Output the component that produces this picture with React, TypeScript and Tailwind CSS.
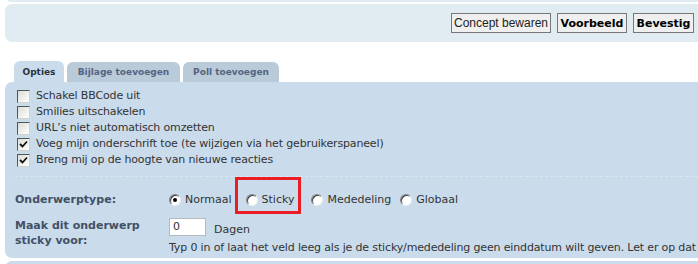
import React from 'react';

const Checkbox = ({ checked }: { checked?: boolean }) => (
  <span className="w-[13px] h-[13px] shrink-0 border border-t-[#555] border-l-[#555] border-b-[#d4d0c8] border-r-[#d4d0c8] bg-gradient-to-br from-[#dcdcd7] to-white flex items-center justify-center">
    {checked && (
      <svg width="9" height="9" viewBox="0 0 9 9">
        <path d="M1 4 L3.5 6.5 L8 1.5" fill="none" stroke="#111" strokeWidth="1.8" />
      </svg>
    )}
  </span>
);

const Radio = ({ checked }: { checked?: boolean }) => (
  <span className="w-[12px] h-[12px] shrink-0 rounded-full border border-t-[#808080] border-l-[#808080] border-b-[#eee] border-r-[#eee] bg-white shadow-[inset_1px_1px_0_#404040] flex items-center justify-center">
    {checked && <span className="w-[4px] h-[4px] rounded-full bg-black" />}
  </span>
);

const options = [
  { label: 'Schakel BBCode uit', checked: false },
  { label: 'Smilies uitschakelen', checked: false },
  { label: 'URL’s niet automatisch omzetten', checked: false },
  { label: 'Voeg mijn onderschrift toe (te wijzigen via het gebruikerspaneel)', checked: true },
  { label: 'Breng mij op de hoogte van nieuwe reacties', checked: true },
];

export default function App() {
  return (
    <div className="w-[698px] h-[264px] overflow-hidden bg-white text-[11px] text-[#333] font-['DejaVu_Sans','Verdana',sans-serif]">
      {/* bottom edge of panel above */}
      <div className="ml-[8px] mr-[-10px] h-[2px] bg-[#e1ebf2] rounded-b-[4px]" />

      {/* submit bar */}
      <div className="mt-[2px] ml-[5px] mr-[-10px] h-[38px] bg-[#e1ebf2] rounded-[7px] flex items-center justify-end gap-[6px] pr-[14px]">
        <button className="w-[100px] h-[20px] bg-[#efefef] border border-[#777] text-[#222] font-['Liberation_Sans',sans-serif] text-[12px] leading-none">
          Concept bewaren
        </button>
        <button className="w-[70px] h-[20px] bg-[#efefef] border border-[#777] text-black font-bold leading-none">
          Voorbeeld
        </button>
        <button className="w-[61px] h-[20px] bg-[#efefef] border border-[#777] text-black font-bold leading-none">
          Bevestig
        </button>
      </div>

      {/* tabs */}
      <div className="mt-[20px] ml-[14px] flex gap-[3px] h-[20px] items-end text-[9px]">
        <div className="w-[50px] h-[21px] rounded-t-[6px] bg-[#cadceb] font-bold text-[#28313f] flex items-center justify-center pt-[2px]">
          Opties
        </div>
        <div className="w-[113px] h-[20px] rounded-t-[6px] bg-[#b9cad9] font-bold text-[#536482] flex items-center justify-center pt-[2px]">
          Bijlage toevoegen
        </div>
        <div className="w-[96px] h-[20px] rounded-t-[6px] bg-[#b9cad9] font-bold text-[#536482] flex items-center justify-center pt-[2px]">
          Poll toevoegen
        </div>
      </div>

      {/* options panel */}
      <div className="ml-[5px] mr-[-10px] h-[176px] bg-[#cadceb] rounded-[7px] pt-[6px]">
        <div className="pl-[12px] flex flex-col">
          {options.map((o) => (
            <div key={o.label} className="h-[16px] flex items-center gap-[6px] whitespace-nowrap">
              <Checkbox checked={o.checked} />
              <span className="text-[#333] tracking-[-0.15px]">{o.label}</span>
            </div>
          ))}
        </div>

        <div className="mt-[8px] mx-[10px] border-t border-dashed border-[#dde6ee]" />

        <div className="flex mt-[8px] pl-[10px] h-[30px] items-center">
          <div className="w-[154px] shrink-0 font-bold text-[#425067]">Onderwerptype:</div>
          <div className="flex items-center">
            <div className="flex items-center gap-[4px]">
              <Radio checked />
              <span>Normaal</span>
            </div>
            <div className="relative ml-[14px] flex items-center gap-[4px]">
              <span className="absolute left-[-11px] top-[-15px] w-[66px] h-[37px] border-[3px] border-[#ea1c24]" />
              <Radio />
              <span>Sticky</span>
            </div>
            <div className="ml-[17px] flex items-center gap-[4px]">
              <Radio />
              <span>Mededeling</span>
            </div>
            <div className="ml-[9px] flex items-center gap-[4px]">
              <Radio />
              <span>Globaal</span>
            </div>
          </div>
        </div>

        <div className="flex pl-[10px] mt-[1px]">
          <div className="w-[154px] shrink-0 font-bold text-[#425067] leading-[15px] pt-[2px]">
            Maak dit onderwerp
            <br />
            sticky voor:
          </div>
          <div className="flex flex-col whitespace-nowrap">
            <div className="flex items-center gap-[8px]">
              <span className="w-[37px] h-[18px] bg-white border border-[#b4bac0] px-[3px] leading-[16px] text-[#333]">0</span>
              <span className="pt-[6px]">Dagen</span>
            </div>
            <div className="mt-[1px] tracking-[-0.15px]">
              Typ 0 in of laat het veld leeg als je de sticky/mededeling geen einddatum wilt geven. Let er op dat dit nummer
            </div>
          </div>
        </div>
      </div>

      {/* next panel */}
      <div className="mt-[3px] ml-[5px] mr-[-10px] h-[20px] bg-[#cadceb] rounded-[7px]" />
    </div>
  );
}
